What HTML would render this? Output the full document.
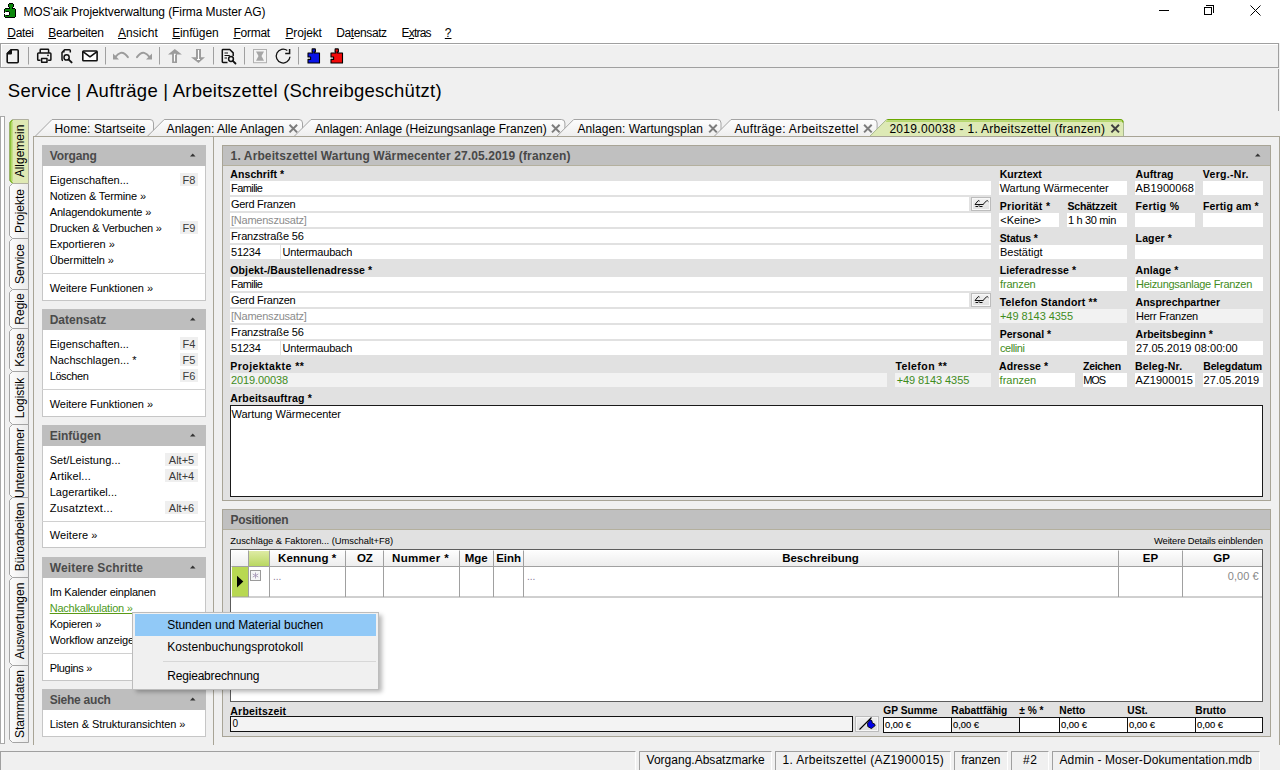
<!DOCTYPE html>
<html><head><meta charset="utf-8">
<style>
*{box-sizing:border-box}
html,body{margin:0;padding:0}
body{width:1280px;height:770px;position:relative;overflow:hidden;background:#f0f0f0;font-family:"Liberation Sans",sans-serif;color:#000;font-size:11px}
.a{position:absolute}
.t{position:absolute;white-space:nowrap}
.u{text-decoration:underline;text-underline-offset:1px}
svg{position:absolute;overflow:visible}
</style></head><body>
<div class="a" style="left:0px;top:0px;width:1280px;height:43px;background:#fff"></div>
<svg style="left:0;top:0" width="20" height="20" shape-rendering="crispEdges">
<rect x="9" y="4" width="4" height="3" fill="#0b870b"/><rect x="10" y="7" width="2" height="2" fill="#0b870b"/><rect x="5" y="9" width="10" height="8" fill="#0b870b"/>
<g fill="#000">
<rect x="9" y="3" width="4" height="1"/><rect x="8" y="4" width="1" height="3"/><rect x="13" y="4" width="1" height="3"/>
<rect x="9" y="7" width="1" height="1"/><rect x="12" y="7" width="1" height="1"/>
<rect x="5" y="8" width="5" height="1"/><rect x="12" y="8" width="3" height="1"/>
<rect x="4" y="9" width="1" height="4"/><rect x="4" y="14" width="1" height="3"/><rect x="15" y="9" width="1" height="8"/>
<rect x="5" y="17" width="10" height="1"/>
<rect x="6" y="11" width="3" height="1"/><rect x="9" y="12" width="1" height="3"/><rect x="6" y="15" width="3" height="1"/>
</g>
<rect x="5" y="12" width="4" height="3" fill="#fff"/><rect x="4" y="13" width="1" height="1" fill="#fff"/>
</svg>
<div class="t" style="left:23.40px;top:4.04px;font-size:12px;line-height:16px;height:16px;letter-spacing:-0.086px;">MOS&#x27;aik Projektverwaltung (Firma Muster AG)</div>
<div class="a" style="left:1159px;top:10px;width:10px;height:1px;background:#000"></div>
<div class="a" style="left:1206px;top:5px;width:8px;height:8px;border:1px solid #000;border-left:0;border-bottom:0"></div>
<div class="a" style="left:1204px;top:7px;width:8px;height:8px;border:1px solid #000;background:#fff"></div>
<svg style="left:1250px;top:5px" width="11" height="11"><path d="M0.5 0.5L10.5 10.5M10.5 0.5L0.5 10.5" stroke="#000" stroke-width="1"/></svg>
<div class="t" style="left:7.30px;top:25.04px;font-size:12px;line-height:16px;height:16px;letter-spacing:-0.326px;"><span class="u">D</span>atei</div>
<div class="t" style="left:48.30px;top:25.04px;font-size:12px;line-height:16px;height:16px;letter-spacing:-0.276px;"><span class="u">B</span>earbeiten</div>
<div class="t" style="left:118.00px;top:25.04px;font-size:12px;line-height:16px;height:16px;letter-spacing:0.061px;"><span class="u">A</span>nsicht</div>
<div class="t" style="left:172.20px;top:25.04px;font-size:12px;line-height:16px;height:16px;letter-spacing:-0.136px;"><span class="u">E</span>infügen</div>
<div class="t" style="left:233.40px;top:25.04px;font-size:12px;line-height:16px;height:16px;letter-spacing:-0.239px;"><span class="u">F</span>ormat</div>
<div class="t" style="left:285.50px;top:25.04px;font-size:12px;line-height:16px;height:16px;letter-spacing:-0.151px;"><span class="u">P</span>rojekt</div>
<div class="t" style="left:336.30px;top:25.04px;font-size:12px;line-height:16px;height:16px;letter-spacing:-0.405px;">Da<span class="u">t</span>ensatz</div>
<div class="t" style="left:401.50px;top:25.04px;font-size:12px;line-height:16px;height:16px;letter-spacing:-0.789px;">E<span class="u">x</span>tras</div>
<div class="t" style="left:444.80px;top:25.04px;font-size:12px;line-height:16px;height:16px;"><span class="u">?</span></div>
<div class="a" style="left:0px;top:43px;width:1279px;height:25px;border:1px solid #a0a0a0;background:#f0f0f0;box-shadow:inset 1px 1px 0 #fff"></div>
<svg style="left:0;top:0" width="1280" height="70">
<g fill="none" stroke="#111" stroke-width="1.6" stroke-linejoin="round">
<path d="M11 49.8h6.2q1 0 1 1v10.9q0 1-1 1h-9q-1 0-1-1v-8.1z"/>
<path d="M7.6 53.6l3.6-3.6v3.6z" fill="#111"/>
</g>
<g stroke="#a0a0a0" stroke-width="1">
<path d="M28.5 47v17.5M105.5 47v17.5M159.5 47v17.5M213.5 47v17.5M244.5 47v17.5M298.5 47v17.5"/>
</g>
<g fill="none" stroke="#111" stroke-width="1.5" stroke-linejoin="round">
<path d="M40.2 53v-3q0-0.7 0.7-0.7h7q0.7 0 0.7 0.7v3"/>
<path d="M40.5 60.2h-2q-0.8 0-0.8-0.8v-5.6q0-0.8 0.8-0.8h11.6q0.8 0 0.8 0.8v5.6q0 0.8-0.8 0.8h-2"/>
<rect x="41.6" y="58.5" width="5.4" height="3.7" fill="#fff"/>
</g>
<circle cx="48" cy="55.3" r="0.9" fill="#111"/>
<g fill="none" stroke="#111" stroke-width="1.5" stroke-linejoin="round">
<path d="M63 60.5q-1 0-1-1v-7l2.6-2.7h4.9q0.8 0 0.8 0.8v2"/>
<circle cx="66.6" cy="57.4" r="2.6"/>
<path d="M68.5 59.3l3.1 3.1" stroke-width="1.9" stroke-linecap="round"/>
</g>
<path d="M62.1 52.6l2.5-2.6v2.6z" fill="#111"/>
<g fill="#fff" stroke="#111" stroke-width="1.6" stroke-linejoin="round">
<rect x="82.8" y="51" width="14.3" height="9.8" rx="0.8"/>
<path d="M83 51.6l7 5.2l7-5.2" fill="none"/>
</g>
<g fill="none" stroke="#9c9c9c" stroke-width="2" stroke-linecap="round">
<path d="M115.2 57.2q3-3.6 5.5-4.3q3.5-0.8 7.2 4.3"/>
<path d="M137 57.2q3.7-5.1 7.2-4.3q2.5 0.7 5.5 4.3"/>
</g>
<path d="M113 53.5v6.1h6l-1.5-1.7z" fill="#9c9c9c"/>
<path d="M152 53.5v6.1h-6l1.5-1.7z" fill="#9c9c9c"/>
<g fill="#9c9c9c">
<path d="M174.8 49L168 54.6h4.1v8.3h4.9v-8.3h4.9z"/>
<path d="M196 49h5v8.2h4L198.5 63L191 57.2h5z"/>
</g>
<g stroke="#fff" stroke-width="1.1" fill="none">
<path d="M174.5 61.5v-7.2h1.3M198.5 50v9.5M197 59.5h3"/>
</g>
<g fill="none" stroke="#111" stroke-width="1.5" stroke-linejoin="round">
<path d="M227.5 62.5h-4.5q-0.7 0-0.7-0.7v-11.6q0-0.7 0.7-0.7h6.8l3.4 3.4v3"/>
<path d="M224.5 53h3.5M224.5 55.5h5.3M224.5 58h2.5" stroke-width="1.1"/>
<circle cx="231" cy="59" r="2.4"/>
<path d="M232.8 60.8l2.7 2.7" stroke-width="1.8" stroke-linecap="round"/>
</g>
<g>
<rect x="253.5" y="49.5" width="13" height="13.2" fill="#f4f4f4" stroke="#b0b0b0" stroke-width="1"/>
<path d="M256 51.5h8l-2.5 4.6l2.5 4.6h-8l2.5-4.6z" fill="#a6a6a6"/>
</g>
<path d="M290 56.8A6.9 6.9 0 1 1 287.3 50.6" fill="none" stroke="#111" stroke-width="1.3"/><path d="M289.6 49v4.6h-4.4" fill="none" stroke="#111" stroke-width="1.5"/>
<g stroke="#000" stroke-width="1.1" stroke-linejoin="round">
<path d="M312.2 48.9h2.6q0.6 0 0.6 0.6v2.3h-0.8v1.2h4.9v10h-11.5v-3.6h2.6v-2.4h-2.6v-4h4.9v-1.2h-0.8v-2.3q0-0.6 0.6-0.6z" fill="#0a14e8"/>
<path d="M335.2 48.9h2.6q0.6 0 0.6 0.6v2.3h-0.8v1.2h4.9v10h-11.5v-3.6h2.6v-2.4h-2.6v-4h4.9v-1.2h-0.8v-2.3q0-0.6 0.6-0.6z" fill="#f20a0a"/>
</g>
</svg>
<div class="a" style="left:1278px;top:69px;width:1px;height:42px;background:#a0a0a0"></div>
<div class="t" style="left:7.80px;top:80.09px;font-size:18.5px;line-height:22px;height:22px;letter-spacing:0.247px;">Service | Aufträge | Arbeitszettel (Schreibgeschützt)</div>
<div class="a" style="left:0px;top:116px;width:5px;height:628px;border:1px solid #a8a8a8;border-bottom:1px solid #a8a8a8;background:#fff"></div>
<svg style="left:0;top:0" width="40" height="770"><defs><linearGradient id="vg" x1="0" y1="0" x2="1" y2="0"><stop offset="0" stop-color="#fcfcfc"/><stop offset="1" stop-color="#ebebeb"/></linearGradient></defs><path d="M28.5 183.5H12.5L9.5 186.5V235.5L12.5 238.5H28.5Z" fill="url(#vg)" stroke="#a4a4a4" stroke-width="1"/><path d="M28.5 238.5H12.5L9.5 241.5V286.5L12.5 289.5H28.5Z" fill="url(#vg)" stroke="#a4a4a4" stroke-width="1"/><path d="M28.5 289.5H12.5L9.5 292.5V325.5L12.5 328.5H28.5Z" fill="url(#vg)" stroke="#a4a4a4" stroke-width="1"/><path d="M28.5 328.5H12.5L9.5 331.5V368.5L12.5 371.5H28.5Z" fill="url(#vg)" stroke="#a4a4a4" stroke-width="1"/><path d="M28.5 371.5H12.5L9.5 374.5V421.5L12.5 424.5H28.5Z" fill="url(#vg)" stroke="#a4a4a4" stroke-width="1"/><path d="M28.5 424.5H12.5L9.5 427.5V494.5L12.5 497.5H28.5Z" fill="url(#vg)" stroke="#a4a4a4" stroke-width="1"/><path d="M28.5 497.5H12.5L9.5 500.5V574.5L12.5 577.5H28.5Z" fill="url(#vg)" stroke="#a4a4a4" stroke-width="1"/><path d="M28.5 577.5H12.5L9.5 580.5V662.5L12.5 665.5H28.5Z" fill="url(#vg)" stroke="#a4a4a4" stroke-width="1"/><path d="M28.5 665.5H12.5L9.5 668.5V739.5L12.5 742.5H28.5Z" fill="url(#vg)" stroke="#a4a4a4" stroke-width="1"/><path d="M28.5 119.5H12.5L9.5 122.5V180.5L12.5 183.5H28.5Z" fill="#dfe9b4" stroke="#b0b0a0" stroke-width="1"/><path d="M12.5 119.8L10.2 122.5V180.5L12.5 183.2" fill="none" stroke="#7ab81e" stroke-width="1.2"/><path d="M11.8 122V181" fill="none" stroke="#b4d86a" stroke-width="1.6"/></svg>
<div class="a" style="left:-30.5px;top:143.0px;width:100px;height:16px;line-height:16px;text-align:center;font-size:12px;white-space:nowrap;transform:rotate(-90deg)">Allgemein</div>
<div class="a" style="left:-30.5px;top:202.5px;width:100px;height:16px;line-height:16px;text-align:center;font-size:12px;white-space:nowrap;transform:rotate(-90deg)">Projekte</div>
<div class="a" style="left:-30.5px;top:255.5px;width:100px;height:16px;line-height:16px;text-align:center;font-size:12px;white-space:nowrap;transform:rotate(-90deg)">Service</div>
<div class="a" style="left:-30.5px;top:300.5px;width:100px;height:16px;line-height:16px;text-align:center;font-size:12px;white-space:nowrap;transform:rotate(-90deg)">Regie</div>
<div class="a" style="left:-30.5px;top:341.5px;width:100px;height:16px;line-height:16px;text-align:center;font-size:12px;white-space:nowrap;transform:rotate(-90deg)">Kasse</div>
<div class="a" style="left:-30.5px;top:389.5px;width:100px;height:16px;line-height:16px;text-align:center;font-size:12px;white-space:nowrap;transform:rotate(-90deg)">Logistik</div>
<div class="a" style="left:-30.5px;top:455.0px;width:100px;height:16px;line-height:16px;text-align:center;font-size:12px;white-space:nowrap;transform:rotate(-90deg)">Unternehmer</div>
<div class="a" style="left:-30.5px;top:529.0px;width:100px;height:16px;line-height:16px;text-align:center;font-size:12px;white-space:nowrap;transform:rotate(-90deg)">Büroarbeiten</div>
<div class="a" style="left:-30.5px;top:613.0px;width:100px;height:16px;line-height:16px;text-align:center;font-size:12px;white-space:nowrap;transform:rotate(-90deg)">Auswertungen</div>
<div class="a" style="left:-30.5px;top:695.5px;width:100px;height:16px;line-height:16px;text-align:center;font-size:12px;white-space:nowrap;transform:rotate(-90deg)">Stammdaten</div>
<div class="a" style="left:33px;top:136px;width:1247px;height:609px;border-left:1px solid #a8a496;border-top:1px solid #a8a496"></div>
<div class="a" style="left:213px;top:137px;width:1px;height:608px;background:#a8a496"></div>
<div class="a" style="left:1279px;top:137px;width:1px;height:608px;background:#a8a496"></div>
<svg style="left:0;top:0" width="1280" height="140">
<defs><linearGradient id="tg" x1="0" y1="0" x2="0" y2="1"><stop offset="0" stop-color="#fdfdfd"/><stop offset="1" stop-color="#eeeeee"/></linearGradient></defs>
<path d="M35 136.5L52 119.5H150Q153.5 119.5 153.5 123V136.5Z" fill="url(#tg)" stroke="#a4a4a4" stroke-width="1"/>
<path d="M147.2 136.5L164.2 119.5H299Q302.5 119.5 302.5 123V136.5Z" fill="url(#tg)" stroke="#a4a4a4" stroke-width="1"/>
<path d="M289.5 124.8l7.6 7.6M297.09999999999997 124.8l-7.6 7.6" stroke="#7c7c7c" stroke-width="2"/>
<path d="M294 136.5L311 119.5H561.4Q564.9 119.5 564.9 123V136.5Z" fill="url(#tg)" stroke="#a4a4a4" stroke-width="1"/>
<path d="M552.0 124.8l7.6 7.6M559.6 124.8l-7.6 7.6" stroke="#7c7c7c" stroke-width="2"/>
<path d="M556.7 136.5L573.7 119.5H717.5Q721.0 119.5 721.0 123V136.5Z" fill="url(#tg)" stroke="#a4a4a4" stroke-width="1"/>
<path d="M709.1999999999999 124.8l7.6 7.6M716.8 124.8l-7.6 7.6" stroke="#7c7c7c" stroke-width="2"/>
<path d="M714 136.5L731 119.5H873.6Q877.1 119.5 877.1 123V136.5Z" fill="url(#tg)" stroke="#a4a4a4" stroke-width="1"/>
<path d="M864.0999999999999 124.8l7.6 7.6M871.6999999999999 124.8l-7.6 7.6" stroke="#7c7c7c" stroke-width="2"/>
<path d="M869.6 136.5L886.6 119.5H1120Q1123.5 119.5 1123.5 123V136.5Z" fill="#dde9b5" stroke="none"/>
<path d="M869.6 136.5L886.6 119.5H1120Q1123.5 119.5 1123.5 123V136.5" fill="none" stroke="#a8b890" stroke-width="1"/>
<path d="M887.4 119.6H1120Q1123 119.6 1123 122.5" fill="none" stroke="#6aa800" stroke-width="1.2"/>
<path d="M886.1 121.2H1122.2" fill="none" stroke="#b6d86e" stroke-width="1.6"/>
<path d="M1111.3999999999999 124.8l7.6 7.6M1119.0 124.8l-7.6 7.6" stroke="#404040" stroke-width="2"/>
<path d="M33 136.5H1280" stroke="#a8a496" stroke-width="1"/>
</svg>
<div class="t" style="left:54.60px;top:120.59px;font-size:12px;line-height:16px;height:16px;letter-spacing:0.102px;">Home: Startseite</div>
<div class="t" style="left:166.60px;top:120.59px;font-size:12px;line-height:16px;height:16px;letter-spacing:0.044px;">Anlagen: Alle Anlagen</div>
<div class="t" style="left:315.00px;top:120.59px;font-size:12px;line-height:16px;height:16px;letter-spacing:-0.011px;">Anlagen: Anlage (Heizungsanlage Franzen)</div>
<div class="t" style="left:577.50px;top:120.59px;font-size:12px;line-height:16px;height:16px;letter-spacing:0.057px;">Anlagen: Wartungsplan</div>
<div class="t" style="left:734.50px;top:120.59px;font-size:12px;line-height:16px;height:16px;letter-spacing:0.300px;">Aufträge: Arbeitszettel</div>
<div class="t" style="left:889.40px;top:120.59px;font-size:12px;line-height:16px;height:16px;letter-spacing:0.304px;">2019.00038 - 1. Arbeitszettel (franzen)</div>
<div class="a" style="left:42px;top:145px;width:164px;height:21px;background:#bebebe"></div>
<div class="a" style="left:42px;top:166px;width:164px;height:135px;background:#fff;border:1px solid #c6c6c6;border-top:0"></div>
<svg style="left:190px;top:153.3px" width="6" height="4"><path d="M0 3.5L2.75 0.5L5.5 3.5Z" fill="#333"/></svg>
<div class="t" style="left:49.70px;top:147.74px;font-size:12px;line-height:16px;height:16px;font-weight:700;color:#4a4a4a;letter-spacing:-0.112px;">Vorgang</div>
<div class="a" style="left:42px;top:273px;width:164px;height:1px;background:#d0d0d0"></div>
<div class="t" style="left:49.70px;top:172.69px;font-size:11px;line-height:15px;height:15px;letter-spacing:0.019px;">Eigenschaften...</div>
<div class="a" style="left:180px;top:173px;width:18px;height:13px;background:#efefef"></div>
<div class="t" style="left:182.58px;top:172.69px;font-size:11px;line-height:15px;height:15px;color:#3a3a3a;">F8</div>
<div class="t" style="left:49.70px;top:188.69px;font-size:11px;line-height:15px;height:15px;letter-spacing:-0.140px;">Notizen &amp; Termine »</div>
<div class="t" style="left:49.70px;top:204.69px;font-size:11px;line-height:15px;height:15px;letter-spacing:-0.137px;">Anlagendokumente »</div>
<div class="t" style="left:49.70px;top:220.69px;font-size:11px;line-height:15px;height:15px;letter-spacing:-0.195px;">Drucken &amp; Verbuchen »</div>
<div class="a" style="left:180px;top:221px;width:18px;height:13px;background:#efefef"></div>
<div class="t" style="left:182.58px;top:220.69px;font-size:11px;line-height:15px;height:15px;color:#3a3a3a;">F9</div>
<div class="t" style="left:49.70px;top:236.69px;font-size:11px;line-height:15px;height:15px;letter-spacing:-0.026px;">Exportieren »</div>
<div class="t" style="left:49.70px;top:252.69px;font-size:11px;line-height:15px;height:15px;letter-spacing:-0.094px;">Übermitteln »</div>
<div class="t" style="left:49.70px;top:280.69px;font-size:11px;line-height:15px;height:15px;letter-spacing:-0.053px;">Weitere Funktionen »</div>
<div class="a" style="left:42px;top:309px;width:164px;height:21px;background:#bebebe"></div>
<div class="a" style="left:42px;top:330px;width:164px;height:87px;background:#fff;border:1px solid #c6c6c6;border-top:0"></div>
<svg style="left:190px;top:317.3px" width="6" height="4"><path d="M0 3.5L2.75 0.5L5.5 3.5Z" fill="#333"/></svg>
<div class="t" style="left:49.70px;top:311.74px;font-size:12px;line-height:16px;height:16px;font-weight:700;color:#4a4a4a;">Datensatz</div>
<div class="a" style="left:42px;top:389px;width:164px;height:1px;background:#d0d0d0"></div>
<div class="t" style="left:49.70px;top:336.69px;font-size:11px;line-height:15px;height:15px;letter-spacing:0.019px;">Eigenschaften...</div>
<div class="a" style="left:180px;top:337px;width:18px;height:13px;background:#efefef"></div>
<div class="t" style="left:182.58px;top:336.69px;font-size:11px;line-height:15px;height:15px;color:#3a3a3a;">F4</div>
<div class="t" style="left:49.70px;top:352.69px;font-size:11px;line-height:15px;height:15px;letter-spacing:0.046px;">Nachschlagen... *</div>
<div class="a" style="left:180px;top:353px;width:18px;height:13px;background:#efefef"></div>
<div class="t" style="left:182.58px;top:352.69px;font-size:11px;line-height:15px;height:15px;color:#3a3a3a;">F5</div>
<div class="t" style="left:49.70px;top:368.69px;font-size:11px;line-height:15px;height:15px;letter-spacing:-0.399px;">Löschen</div>
<div class="a" style="left:180px;top:369px;width:18px;height:13px;background:#efefef"></div>
<div class="t" style="left:182.58px;top:368.69px;font-size:11px;line-height:15px;height:15px;color:#3a3a3a;">F6</div>
<div class="t" style="left:49.70px;top:396.69px;font-size:11px;line-height:15px;height:15px;letter-spacing:-0.053px;">Weitere Funktionen »</div>
<div class="a" style="left:42px;top:425px;width:164px;height:21px;background:#bebebe"></div>
<div class="a" style="left:42px;top:446px;width:164px;height:102px;background:#fff;border:1px solid #c6c6c6;border-top:0"></div>
<svg style="left:190px;top:433.3px" width="6" height="4"><path d="M0 3.5L2.75 0.5L5.5 3.5Z" fill="#333"/></svg>
<div class="t" style="left:49.70px;top:427.74px;font-size:12px;line-height:16px;height:16px;font-weight:700;color:#4a4a4a;">Einfügen</div>
<div class="a" style="left:42px;top:521px;width:164px;height:1px;background:#d0d0d0"></div>
<div class="t" style="left:49.70px;top:452.89px;font-size:11px;line-height:15px;height:15px;letter-spacing:0.038px;">Set/Leistung...</div>
<div class="a" style="left:165px;top:453.2px;width:33px;height:13px;background:#efefef"></div>
<div class="t" style="left:168.80px;top:452.89px;font-size:11px;line-height:15px;height:15px;color:#3a3a3a;">Alt+5</div>
<div class="t" style="left:49.70px;top:468.89px;font-size:11px;line-height:15px;height:15px;letter-spacing:0.147px;">Artikel...</div>
<div class="a" style="left:165px;top:469.2px;width:33px;height:13px;background:#efefef"></div>
<div class="t" style="left:168.80px;top:468.89px;font-size:11px;line-height:15px;height:15px;color:#3a3a3a;">Alt+4</div>
<div class="t" style="left:49.70px;top:484.89px;font-size:11px;line-height:15px;height:15px;letter-spacing:0.056px;">Lagerartikel...</div>
<div class="t" style="left:49.70px;top:500.89px;font-size:11px;line-height:15px;height:15px;letter-spacing:0.275px;">Zusatztext...</div>
<div class="a" style="left:165px;top:501.2px;width:33px;height:13px;background:#efefef"></div>
<div class="t" style="left:168.80px;top:500.89px;font-size:11px;line-height:15px;height:15px;color:#3a3a3a;">Alt+6</div>
<div class="t" style="left:49.70px;top:528.49px;font-size:11px;line-height:15px;height:15px;letter-spacing:0.114px;">Weitere »</div>
<div class="a" style="left:42px;top:557px;width:164px;height:21px;background:#bebebe"></div>
<div class="a" style="left:42px;top:578px;width:164px;height:103px;background:#fff;border:1px solid #c6c6c6;border-top:0"></div>
<svg style="left:190px;top:565.3px" width="6" height="4"><path d="M0 3.5L2.75 0.5L5.5 3.5Z" fill="#333"/></svg>
<div class="t" style="left:49.70px;top:559.74px;font-size:12px;line-height:16px;height:16px;font-weight:700;color:#4a4a4a;letter-spacing:0.146px;">Weitere Schritte</div>
<div class="a" style="left:42px;top:653px;width:164px;height:1px;background:#d0d0d0"></div>
<div class="t" style="left:49.70px;top:584.69px;font-size:11px;line-height:15px;height:15px;letter-spacing:-0.199px;">Im Kalender einplanen</div>
<div class="t" style="left:49.70px;top:600.69px;font-size:11px;line-height:15px;height:15px;color:#4c9a1a;letter-spacing:-0.226px;text-decoration:underline;text-underline-offset:1px;text-decoration-color:#5a9a14">Nachkalkulation »</div>
<div class="t" style="left:49.70px;top:616.69px;font-size:11px;line-height:15px;height:15px;letter-spacing:-0.182px;">Kopieren »</div>
<div class="t" style="left:49.70px;top:632.69px;font-size:11px;line-height:15px;height:15px;letter-spacing:-0.153px;">Workflow anzeigen »</div>
<div class="t" style="left:49.70px;top:660.69px;font-size:11px;line-height:15px;height:15px;letter-spacing:-0.330px;">Plugins »</div>
<div class="a" style="left:42px;top:689px;width:164px;height:21px;background:#bebebe"></div>
<div class="a" style="left:42px;top:710px;width:164px;height:27px;background:#fff;border:1px solid #c6c6c6;border-top:0"></div>
<svg style="left:190px;top:697.3px" width="6" height="4"><path d="M0 3.5L2.75 0.5L5.5 3.5Z" fill="#333"/></svg>
<div class="t" style="left:49.70px;top:691.74px;font-size:12px;line-height:16px;height:16px;font-weight:700;color:#4a4a4a;letter-spacing:-0.236px;">Siehe auch</div>
<div class="t" style="left:49.70px;top:716.69px;font-size:11px;line-height:15px;height:15px;letter-spacing:-0.067px;">Listen &amp; Strukturansichten »</div>
<div class="a" style="left:222px;top:145px;width:1049px;height:356px;border:1px solid #a8a496;background:#e1e1e1"></div>
<div class="a" style="left:223px;top:146px;width:1047px;height:20px;background:#c0c0c0;border-bottom:1px solid #b4b09e"></div>
<div class="t" style="left:230.60px;top:148.04px;font-size:12px;line-height:16px;height:16px;font-weight:700;color:#484848;letter-spacing:0.119px;">1. Arbeitszettel Wartung Wärmecenter 27.05.2019 (franzen)</div>
<svg style="left:1255px;top:152.5px" width="6" height="4"><path d="M0 3.5L2.75 0.5L5.5 3.5Z" fill="#333"/></svg>
<div class="t" style="left:230.30px;top:167.36px;font-size:10.5px;line-height:14px;height:14px;font-weight:700;letter-spacing:0.082px;">Anschrift *</div>
<div class="a" style="left:230px;top:181px;width:761px;height:14px;background:#fff"></div>
<div class="t" style="left:231.00px;top:180.69px;font-size:11px;line-height:15px;height:15px;letter-spacing:-0.579px;">Familie</div>
<div class="a" style="left:230px;top:197px;width:739px;height:14px;background:#fff"></div>
<div class="t" style="left:231.00px;top:196.69px;font-size:11px;line-height:15px;height:15px;letter-spacing:-0.290px;">Gerd Franzen</div>
<div class="a" style="left:230px;top:213px;width:761px;height:14px;background:#fff"></div>
<div class="t" style="left:231.00px;top:212.69px;font-size:11px;line-height:15px;height:15px;color:#8c8c8c;letter-spacing:-0.234px;">[Namenszusatz]</div>
<div class="a" style="left:230px;top:229px;width:761px;height:14px;background:#fff"></div>
<div class="t" style="left:231.00px;top:228.69px;font-size:11px;line-height:15px;height:15px;letter-spacing:-0.128px;">Franzstraße 56</div>
<div class="a" style="left:230px;top:245px;width:50px;height:14px;background:#fff"></div>
<div class="t" style="left:231.00px;top:244.69px;font-size:11px;line-height:15px;height:15px;letter-spacing:-0.199px;">51234</div>
<div class="a" style="left:281px;top:245px;width:710px;height:14px;background:#fff"></div>
<div class="t" style="left:282.50px;top:244.69px;font-size:11px;line-height:15px;height:15px;letter-spacing:-0.205px;">Untermaubach</div>
<div class="t" style="left:230.30px;top:263.36px;font-size:10.5px;line-height:14px;height:14px;font-weight:700;letter-spacing:0.115px;">Objekt-/Baustellenadresse *</div>
<div class="a" style="left:230px;top:277px;width:761px;height:14px;background:#fff"></div>
<div class="t" style="left:231.00px;top:276.69px;font-size:11px;line-height:15px;height:15px;letter-spacing:-0.579px;">Familie</div>
<div class="a" style="left:230px;top:293px;width:739px;height:14px;background:#fff"></div>
<div class="t" style="left:231.00px;top:292.69px;font-size:11px;line-height:15px;height:15px;letter-spacing:-0.290px;">Gerd Franzen</div>
<div class="a" style="left:230px;top:309px;width:761px;height:14px;background:#fff"></div>
<div class="t" style="left:231.00px;top:308.69px;font-size:11px;line-height:15px;height:15px;color:#8c8c8c;letter-spacing:-0.234px;">[Namenszusatz]</div>
<div class="a" style="left:230px;top:325px;width:761px;height:14px;background:#fff"></div>
<div class="t" style="left:231.00px;top:324.69px;font-size:11px;line-height:15px;height:15px;letter-spacing:-0.128px;">Franzstraße 56</div>
<div class="a" style="left:230px;top:341px;width:50px;height:14px;background:#fff"></div>
<div class="t" style="left:231.00px;top:340.69px;font-size:11px;line-height:15px;height:15px;letter-spacing:-0.199px;">51234</div>
<div class="a" style="left:281px;top:341px;width:710px;height:14px;background:#fff"></div>
<div class="t" style="left:282.50px;top:340.69px;font-size:11px;line-height:15px;height:15px;letter-spacing:-0.205px;">Untermaubach</div>
<div class="a" style="left:971px;top:197px;width:20px;height:14px;background:linear-gradient(#f2f2f2,#e0e0e0);border:1px solid #bcbcbc;box-shadow:inset 0 0 0 1px #f8f8f8"></div>
<svg style="left:966px;top:194px" width="30" height="20" viewBox="966 194 30 20"><g fill="none" stroke="#111" stroke-width="1"><path d="M975 204.5L978 200.8Q978.8 200.2 979.6 201.2"/><path d="M975 204.5H983.5"/><path d="M975.5 206.5H978M979.5 206.5H982.5"/><path d="M983 204.5L986.5 200.8Q987.4 200.2 988.4 201.6"/><path d="M979 204V206.5" stroke-width="0.8"/></g></svg>
<div class="a" style="left:971px;top:293px;width:20px;height:14px;background:linear-gradient(#f2f2f2,#e0e0e0);border:1px solid #bcbcbc;box-shadow:inset 0 0 0 1px #f8f8f8"></div>
<svg style="left:966px;top:290px" width="30" height="20" viewBox="966 194 30 20"><g fill="none" stroke="#111" stroke-width="1"><path d="M975 204.5L978 200.8Q978.8 200.2 979.6 201.2"/><path d="M975 204.5H983.5"/><path d="M975.5 206.5H978M979.5 206.5H982.5"/><path d="M983 204.5L986.5 200.8Q987.4 200.2 988.4 201.6"/><path d="M979 204V206.5" stroke-width="0.8"/></g></svg>
<div class="t" style="left:230.30px;top:359.36px;font-size:10.5px;line-height:14px;height:14px;font-weight:700;letter-spacing:0.450px;">Projektakte **</div>
<div class="a" style="left:230px;top:373px;width:657px;height:14px;background:#f2f2f2"></div>
<div class="t" style="left:231.00px;top:372.69px;font-size:11px;line-height:15px;height:15px;color:#3f8c1c;letter-spacing:-0.113px;">2019.00038</div>
<div class="t" style="left:230.30px;top:391.36px;font-size:10.5px;line-height:14px;height:14px;font-weight:700;letter-spacing:0.183px;">Arbeitsauftrag *</div>
<div class="a" style="left:230px;top:405px;width:1033px;height:92px;background:#fff;border:1px solid #1a1a1a"></div>
<div class="t" style="left:231.60px;top:406.79px;font-size:11px;line-height:15px;height:15px;letter-spacing:-0.045px;">Wartung Wärmecenter</div>
<div class="t" style="left:999.70px;top:167.36px;font-size:10.5px;line-height:14px;height:14px;font-weight:700;letter-spacing:0.023px;">Kurztext</div>
<div class="t" style="left:1135.60px;top:167.36px;font-size:10.5px;line-height:14px;height:14px;font-weight:700;letter-spacing:0.094px;">Auftrag</div>
<div class="t" style="left:1202.80px;top:167.36px;font-size:10.5px;line-height:14px;height:14px;font-weight:700;letter-spacing:0.312px;">Verg.-Nr.</div>
<div class="a" style="left:999px;top:181px;width:128px;height:14px;background:#fff"></div>
<div class="t" style="left:999.70px;top:180.69px;font-size:11px;line-height:15px;height:15px;letter-spacing:-0.066px;">Wartung Wärmecenter</div>
<div class="a" style="left:1135px;top:181px;width:60px;height:14px;background:#fff"></div>
<div class="t" style="left:1135.60px;top:180.69px;font-size:11px;line-height:15px;height:15px;letter-spacing:0.100px;">AB1900068</div>
<div class="a" style="left:1203px;top:181px;width:60px;height:14px;background:#fff"></div>
<div class="t" style="left:999.70px;top:199.36px;font-size:10.5px;line-height:14px;height:14px;font-weight:700;letter-spacing:0.303px;">Priorität *</div>
<div class="t" style="left:1067.50px;top:199.36px;font-size:10.5px;line-height:14px;height:14px;font-weight:700;letter-spacing:-0.196px;">Schätzzeit</div>
<div class="t" style="left:1135.60px;top:199.36px;font-size:10.5px;line-height:14px;height:14px;font-weight:700;letter-spacing:0.297px;">Fertig %</div>
<div class="t" style="left:1203.00px;top:199.36px;font-size:10.5px;line-height:14px;height:14px;font-weight:700;letter-spacing:0.130px;">Fertig am *</div>
<div class="a" style="left:999px;top:213px;width:60px;height:14px;background:#fff"></div>
<div class="t" style="left:1000.30px;top:212.69px;font-size:11px;line-height:15px;height:15px;letter-spacing:-0.055px;">&lt;Keine&gt;</div>
<div class="a" style="left:1067px;top:213px;width:60px;height:14px;background:#fff"></div>
<div class="t" style="left:1068.00px;top:212.69px;font-size:11px;line-height:15px;height:15px;letter-spacing:-0.338px;">1 h 30 min</div>
<div class="a" style="left:1135px;top:213px;width:60px;height:14px;background:#fff"></div>
<div class="a" style="left:1203px;top:213px;width:60px;height:14px;background:#fff"></div>
<div class="t" style="left:999.70px;top:231.36px;font-size:10.5px;line-height:14px;height:14px;font-weight:700;letter-spacing:-0.137px;">Status *</div>
<div class="t" style="left:1135.60px;top:231.36px;font-size:10.5px;line-height:14px;height:14px;font-weight:700;letter-spacing:0.127px;">Lager *</div>
<div class="a" style="left:999px;top:245px;width:128px;height:14px;background:#fff"></div>
<div class="t" style="left:1000.00px;top:244.69px;font-size:11px;line-height:15px;height:15px;letter-spacing:-0.035px;">Bestätigt</div>
<div class="a" style="left:1135px;top:245px;width:128px;height:14px;background:#fff"></div>
<div class="t" style="left:999.70px;top:263.36px;font-size:10.5px;line-height:14px;height:14px;font-weight:700;letter-spacing:0.080px;">Lieferadresse *</div>
<div class="t" style="left:1135.60px;top:263.36px;font-size:10.5px;line-height:14px;height:14px;font-weight:700;letter-spacing:0.098px;">Anlage *</div>
<div class="a" style="left:999px;top:277px;width:128px;height:14px;background:#fff"></div>
<div class="t" style="left:1000.00px;top:276.69px;font-size:11px;line-height:15px;height:15px;color:#3f8c1c;letter-spacing:-0.158px;">franzen</div>
<div class="a" style="left:1135px;top:277px;width:128px;height:14px;background:#fff"></div>
<div class="t" style="left:1136.00px;top:276.69px;font-size:11px;line-height:15px;height:15px;color:#3f8c1c;letter-spacing:-0.287px;">Heizungsanlage Franzen</div>
<div class="t" style="left:999.70px;top:295.36px;font-size:10.5px;line-height:14px;height:14px;font-weight:700;letter-spacing:0.198px;">Telefon Standort **</div>
<div class="t" style="left:1135.60px;top:295.36px;font-size:10.5px;line-height:14px;height:14px;font-weight:700;letter-spacing:-0.014px;">Ansprechpartner</div>
<div class="a" style="left:999px;top:309px;width:128px;height:14px;background:#f2f2f2"></div>
<div class="t" style="left:1000.00px;top:308.69px;font-size:11px;line-height:15px;height:15px;color:#3f8c1c;letter-spacing:-0.055px;">+49 8143 4355</div>
<div class="a" style="left:1135px;top:309px;width:128px;height:14px;background:#f2f2f2"></div>
<div class="t" style="left:1136.00px;top:308.69px;font-size:11px;line-height:15px;height:15px;letter-spacing:-0.233px;">Herr Franzen</div>
<div class="t" style="left:999.70px;top:327.36px;font-size:10.5px;line-height:14px;height:14px;font-weight:700;letter-spacing:0.014px;">Personal *</div>
<div class="t" style="left:1135.60px;top:327.36px;font-size:10.5px;line-height:14px;height:14px;font-weight:700;letter-spacing:-0.026px;">Arbeitsbeginn *</div>
<div class="a" style="left:999px;top:341px;width:128px;height:14px;background:#fff"></div>
<div class="t" style="left:1000.00px;top:340.69px;font-size:11px;line-height:15px;height:15px;color:#3f8c1c;letter-spacing:-0.445px;">cellini</div>
<div class="a" style="left:1135px;top:341px;width:128px;height:14px;background:#fff"></div>
<div class="t" style="left:1136.00px;top:340.69px;font-size:11px;line-height:15px;height:15px;letter-spacing:0.045px;">27.05.2019 08:00:00</div>
<div class="t" style="left:895.40px;top:359.36px;font-size:10.5px;line-height:14px;height:14px;font-weight:700;letter-spacing:0.434px;">Telefon **</div>
<div class="t" style="left:999.10px;top:359.36px;font-size:10.5px;line-height:14px;height:14px;font-weight:700;letter-spacing:0.061px;">Adresse *</div>
<div class="t" style="left:1083.00px;top:359.36px;font-size:10.5px;line-height:14px;height:14px;font-weight:700;letter-spacing:-0.270px;">Zeichen</div>
<div class="t" style="left:1135.00px;top:359.36px;font-size:10.5px;line-height:14px;height:14px;font-weight:700;letter-spacing:0.121px;">Beleg-Nr.</div>
<div class="t" style="left:1203.20px;top:359.36px;font-size:10.5px;line-height:14px;height:14px;font-weight:700;letter-spacing:-0.129px;">Belegdatum</div>
<div class="a" style="left:895px;top:373px;width:96px;height:14px;background:#f2f2f2"></div>
<div class="t" style="left:896.70px;top:372.69px;font-size:11px;line-height:15px;height:15px;color:#3f8c1c;letter-spacing:-0.094px;">+49 8143 4355</div>
<div class="a" style="left:999px;top:373px;width:76px;height:14px;background:#fff"></div>
<div class="t" style="left:999.60px;top:372.69px;font-size:11px;line-height:15px;height:15px;color:#3f8c1c;letter-spacing:-0.015px;">franzen</div>
<div class="a" style="left:1083px;top:373px;width:44px;height:14px;background:#fff"></div>
<div class="t" style="left:1083.30px;top:372.69px;font-size:11px;line-height:15px;height:15px;letter-spacing:-1.188px;">MOS</div>
<div class="a" style="left:1135px;top:373px;width:60px;height:14px;background:#fff"></div>
<div class="t" style="left:1135.50px;top:372.69px;font-size:11px;line-height:15px;height:15px;letter-spacing:0.068px;">AZ1900015</div>
<div class="a" style="left:1203px;top:373px;width:60px;height:14px;background:#fff"></div>
<div class="t" style="left:1203.50px;top:372.69px;font-size:11px;line-height:15px;height:15px;letter-spacing:0.074px;">27.05.2019</div>
<div class="a" style="left:222px;top:509px;width:1049px;height:228px;border:1px solid #a8a496;background:#e1e1e1"></div>
<div class="a" style="left:223px;top:510px;width:1047px;height:20px;background:#c0c0c0;border-bottom:1px solid #b4b09e"></div>
<div class="t" style="left:230.60px;top:512.04px;font-size:12px;line-height:16px;height:16px;font-weight:700;color:#484848;letter-spacing:-0.384px;">Positionen</div>
<div class="t" style="left:230.30px;top:534.24px;font-size:9.4px;line-height:13px;height:13px;letter-spacing:-0.032px;">Zuschläge &amp; Faktoren... (Umschalt+F8)</div>
<div class="t" style="left:1154.00px;top:534.24px;font-size:9.4px;line-height:13px;height:13px;letter-spacing:-0.118px;">Weitere Details einblenden</div>
<div class="a" style="left:230px;top:549px;width:1033px;height:152.5px;background:#fff;border:1.5px solid #5c5c5c"></div>
<div class="a" style="left:231.5px;top:550.5px;width:1030px;height:16px;background:linear-gradient(#fdfdfd,#ececec)"></div>
<div class="a" style="left:249px;top:550.5px;width:20px;height:16px;background:linear-gradient(#deeba4,#b6d65c)"></div>
<div class="a" style="left:231.5px;top:567px;width:17px;height:30px;background:#b8d852"></div>
<svg style="left:0;top:0" width="1280" height="770"><g stroke="#a0a0a0" stroke-width="1"><path d="M248.5 550.5V597"/><path d="M269.5 550.5V597"/><path d="M345.5 550.5V597"/><path d="M383.5 550.5V597"/><path d="M459.5 550.5V597"/><path d="M493.5 550.5V597"/><path d="M523.5 550.5V597"/><path d="M1118.5 550.5V597"/><path d="M1182.5 550.5V597"/><path d="M231.5 566.5H1262M231.5 597H1262"/></g><path d="M237 575.8L243.3 581.6L237 587.5Z" fill="#000"/><rect x="250.5" y="570.5" width="10" height="10" fill="#f6f6f6" stroke="#9a9a9a" stroke-width="1"/><g stroke="#a89ab8" stroke-width="0.9"><path d="M255.5 572.5v6M252.7 574l5.6 3M252.7 577l5.6-3"/></g></svg>
<div class="t" style="left:278.00px;top:550.02px;font-size:11.5px;line-height:16px;height:16px;font-weight:700;letter-spacing:0.100px;">Kennung *</div>
<div class="t" style="left:356.91px;top:550.02px;font-size:11.5px;line-height:16px;height:16px;font-weight:700;">OZ</div>
<div class="t" style="left:392.00px;top:550.02px;font-size:11.5px;line-height:16px;height:16px;font-weight:700;letter-spacing:0.334px;">Nummer *</div>
<div class="t" style="left:464.70px;top:550.02px;font-size:11.5px;line-height:16px;height:16px;font-weight:700;">Mge</div>
<div class="t" style="left:496.14px;top:550.02px;font-size:11.5px;line-height:16px;height:16px;font-weight:700;">Einh</div>
<div class="t" style="left:782.16px;top:550.02px;font-size:11.5px;line-height:16px;height:16px;font-weight:700;">Beschreibung</div>
<div class="t" style="left:1142.83px;top:550.02px;font-size:11.5px;line-height:16px;height:16px;font-weight:700;">EP</div>
<div class="t" style="left:1213.29px;top:550.02px;font-size:11.5px;line-height:16px;height:16px;font-weight:700;">GP</div>
<div class="t" style="left:273.00px;top:569.53px;font-size:10px;line-height:14px;height:14px;color:#8a7a9a;">...</div>
<div class="t" style="left:527.00px;top:569.53px;font-size:10px;line-height:14px;height:14px;color:#8a7a9a;">...</div>
<div class="t" style="left:1227.75px;top:568.69px;font-size:11px;line-height:15px;height:15px;color:#888;letter-spacing:0.068px;">0,00 €</div>
<div class="t" style="left:230.30px;top:703.96px;font-size:10.5px;line-height:14px;height:14px;font-weight:700;letter-spacing:0.210px;">Arbeitszeit</div>
<div class="a" style="left:230px;top:716px;width:623px;height:16px;background:#f3f3f3;border:1px solid #111"></div>
<div class="t" style="left:232.50px;top:717.03px;font-size:10px;line-height:14px;height:14px;">0</div>
<div class="a" style="left:855.3px;top:716.2px;width:23.4px;height:15.5px;background:linear-gradient(#eeeeee,#dcdcdc);border:1px solid #bcbcbc;box-shadow:inset 0 0 0 1px #f6f6f6"></div>
<svg style="left:0;top:0" width="1280" height="770"><path d="M859.5 729.5L871.5 717.5" stroke="#000" stroke-width="1.1"/><path d="M867.5 723.2L870.2 719.8L871.8 720.6L872.4 723.2L874.4 723.8L875.2 725.6L871.4 728.6L867.8 726.6Z" fill="#0000e8" stroke="#000" stroke-width="0.9" stroke-linejoin="round"/></svg>
<div class="a" style="left:883px;top:716.5px;width:380px;height:16px;background:#fff;border:1px solid #111"></div>
<div class="a" style="left:952px;top:717.5px;width:67px;height:14px;background:#f0f0f0"></div>
<div class="a" style="left:951px;top:716.5px;width:1px;height:16px;background:#111"></div>
<div class="a" style="left:1019px;top:716.5px;width:1px;height:16px;background:#111"></div>
<div class="a" style="left:1059px;top:716.5px;width:1px;height:16px;background:#111"></div>
<div class="a" style="left:1127px;top:716.5px;width:1px;height:16px;background:#111"></div>
<div class="a" style="left:1195px;top:716.5px;width:1px;height:16px;background:#111"></div>
<div class="t" style="left:883.30px;top:704.07px;font-size:10.2px;line-height:14px;height:14px;font-weight:700;">GP Summe</div>
<div class="t" style="left:885.00px;top:718.44px;font-size:9.4px;line-height:13px;height:13px;letter-spacing:-0.013px;-webkit-text-stroke:0.15px #000">0,00 €</div>
<div class="t" style="left:951.30px;top:704.07px;font-size:10.2px;line-height:14px;height:14px;font-weight:700;">Rabattfähig</div>
<div class="t" style="left:953.00px;top:718.44px;font-size:9.4px;line-height:13px;height:13px;letter-spacing:-0.013px;-webkit-text-stroke:0.15px #000">0,00 €</div>
<div class="t" style="left:1019.30px;top:704.07px;font-size:10.2px;line-height:14px;height:14px;font-weight:700;">± % *</div>
<div class="t" style="left:1059.30px;top:704.07px;font-size:10.2px;line-height:14px;height:14px;font-weight:700;">Netto</div>
<div class="t" style="left:1061.00px;top:718.44px;font-size:9.4px;line-height:13px;height:13px;letter-spacing:-0.013px;-webkit-text-stroke:0.15px #000">0,00 €</div>
<div class="t" style="left:1127.30px;top:704.07px;font-size:10.2px;line-height:14px;height:14px;font-weight:700;">USt.</div>
<div class="t" style="left:1129.00px;top:718.44px;font-size:9.4px;line-height:13px;height:13px;letter-spacing:-0.013px;-webkit-text-stroke:0.15px #000">0,00 €</div>
<div class="t" style="left:1195.30px;top:704.07px;font-size:10.2px;line-height:14px;height:14px;font-weight:700;">Brutto</div>
<div class="t" style="left:1197.00px;top:718.44px;font-size:9.4px;line-height:13px;height:13px;letter-spacing:-0.013px;-webkit-text-stroke:0.15px #000">0,00 €</div>
<div class="a" style="left:136px;top:615px;width:246px;height:77px;background:rgba(0,0,0,0.28);filter:blur(2px)"></div>
<div class="a" style="left:132px;top:611.5px;width:247px;height:78px;background:#f0f0f0;border:1px solid #bcbcbc"></div>
<div class="a" style="left:135px;top:614.3px;width:241px;height:21.6px;background:#91c9f7"></div>
<div class="a" style="left:163px;top:661px;width:213px;height:1px;background:#d7d7d7"></div>
<div class="t" style="left:167.20px;top:617.04px;font-size:12px;line-height:16px;height:16px;letter-spacing:-0.029px;">Stunden und Material buchen</div>
<div class="t" style="left:167.20px;top:639.04px;font-size:12px;line-height:16px;height:16px;letter-spacing:0.054px;">Kostenbuchungsprotokoll</div>
<div class="t" style="left:167.20px;top:668.04px;font-size:12px;line-height:16px;height:16px;letter-spacing:-0.183px;">Regieabrechnung</div>
<div class="a" style="left:0px;top:751px;width:1280px;height:19px;background:#f0f0f0"></div>
<div class="a" style="left:0px;top:751px;width:636px;height:20px;border-left:1px solid #a0a0a0;border-top:1px solid #a0a0a0;border-right:1px solid #fff"></div>
<div class="a" style="left:639.1px;top:751px;width:132.89999999999998px;height:20px;border-left:1px solid #a0a0a0;border-top:1px solid #a0a0a0;border-right:1px solid #fff"></div>
<div class="t" style="left:646.60px;top:752.09px;font-size:12px;line-height:16px;height:16px;letter-spacing:0.006px;">Vorgang.Absatzmarke</div>
<div class="a" style="left:775.4px;top:751px;width:175.30000000000007px;height:20px;border-left:1px solid #a0a0a0;border-top:1px solid #a0a0a0;border-right:1px solid #fff"></div>
<div class="t" style="left:782.50px;top:752.09px;font-size:12px;line-height:16px;height:16px;letter-spacing:0.336px;">1. Arbeitszettel (AZ1900015)</div>
<div class="a" style="left:954.3px;top:751px;width:53.40000000000009px;height:20px;border-left:1px solid #a0a0a0;border-top:1px solid #a0a0a0;border-right:1px solid #fff"></div>
<div class="t" style="left:961.25px;top:752.09px;font-size:12px;line-height:16px;height:16px;letter-spacing:-0.147px;">franzen</div>
<div class="a" style="left:1011px;top:751px;width:37.90000000000009px;height:20px;border-left:1px solid #a0a0a0;border-top:1px solid #a0a0a0;border-right:1px solid #fff"></div>
<div class="t" style="left:1023.00px;top:752.09px;font-size:12px;line-height:16px;height:16px;letter-spacing:0.620px;">#2</div>
<div class="a" style="left:1052.2px;top:751px;width:207.79999999999995px;height:20px;border-left:1px solid #a0a0a0;border-top:1px solid #a0a0a0;border-right:1px solid #fff"></div>
<div class="t" style="left:1059.50px;top:752.09px;font-size:12px;line-height:16px;height:16px;letter-spacing:0.100px;">Admin - Moser-Dokumentation.mdb</div>
</body></html>
